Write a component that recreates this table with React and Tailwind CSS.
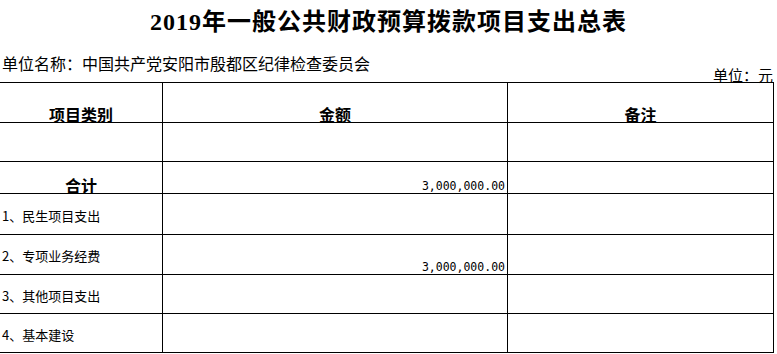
export default function App() {
  const cjk = { fontFamily: '"Noto Sans CJK SC", sans-serif' };
  const rows = [
    { h: "h-[40px]", a: "项目类别", b: "金额", c: "备注", head: true },
    { h: "h-[39px]", a: "", b: "", c: "" },
    { h: "h-[32px]", a: "合计", b: "", num: "3,000,000.00", head: true },
    { h: "h-[41px]", a: "1、民生项目支出" },
    { h: "h-[40px]", a: "2、专项业务经费", num: "3,000,000.00" },
    { h: "h-[39px]", a: "3、其他项目支出" },
    { h: "h-[39px]", a: "4、基本建设" },
  ];
  return (
    <div className="w-[777px] h-[354px] bg-white text-black overflow-hidden" style={cjk}>
      <div className="h-[40px] flex items-center justify-center pt-[3px]">
        <h1
          className="text-[24px] font-bold leading-none tracking-[1px]"
          style={{ fontFamily: '"Liberation Serif", "Noto Sans CJK SC", serif' }}
        >
          2019年一般公共财政预算拨款项目支出总表
        </h1>
      </div>
      <div className="h-[42px] flex justify-between pr-[4px]">
        <span className="text-[16px] leading-[16px] mt-[15px] pl-[2px]">
          单位名称：中国共产党安阳市殷都区纪律检查委员会
        </span>
        <span className="text-[15px] leading-[15px] self-end">单位：元</span>
      </div>
      <div className="w-[774px] border-t border-r border-black">
        {rows.map((r, i) => (
          <div key={i} className={`grid grid-cols-[163px_345px_265px] border-b border-black ${r.h}`}>
            <div className={`border-r border-black flex ${r.head ? "items-end justify-center" : "items-center pl-[2px] pt-[3px]"}`}>
              {r.head ? (
                <span className="text-[16px] font-bold leading-[16px]">{r.a}</span>
              ) : (
                <span className="text-[13px] leading-[14px]">{r.a}</span>
              )}
            </div>
            <div className="border-r border-black flex items-end justify-center relative">
              {r.b && <span className="text-[16px] font-bold leading-[16px]">{r.b}</span>}
              {r.num && (
                <span
                  className="absolute right-[2px] bottom-[1px] text-[11.5px] leading-[11px]"
                  style={{ fontFamily: '"DejaVu Sans Mono", monospace' }}
                >
                  {r.num}
                </span>
              )}
            </div>
            <div className="flex items-end justify-center">
              {r.c && <span className="text-[16px] font-bold leading-[16px]">{r.c}</span>}
            </div>
          </div>
        ))}
      </div>
    </div>
  );
}
